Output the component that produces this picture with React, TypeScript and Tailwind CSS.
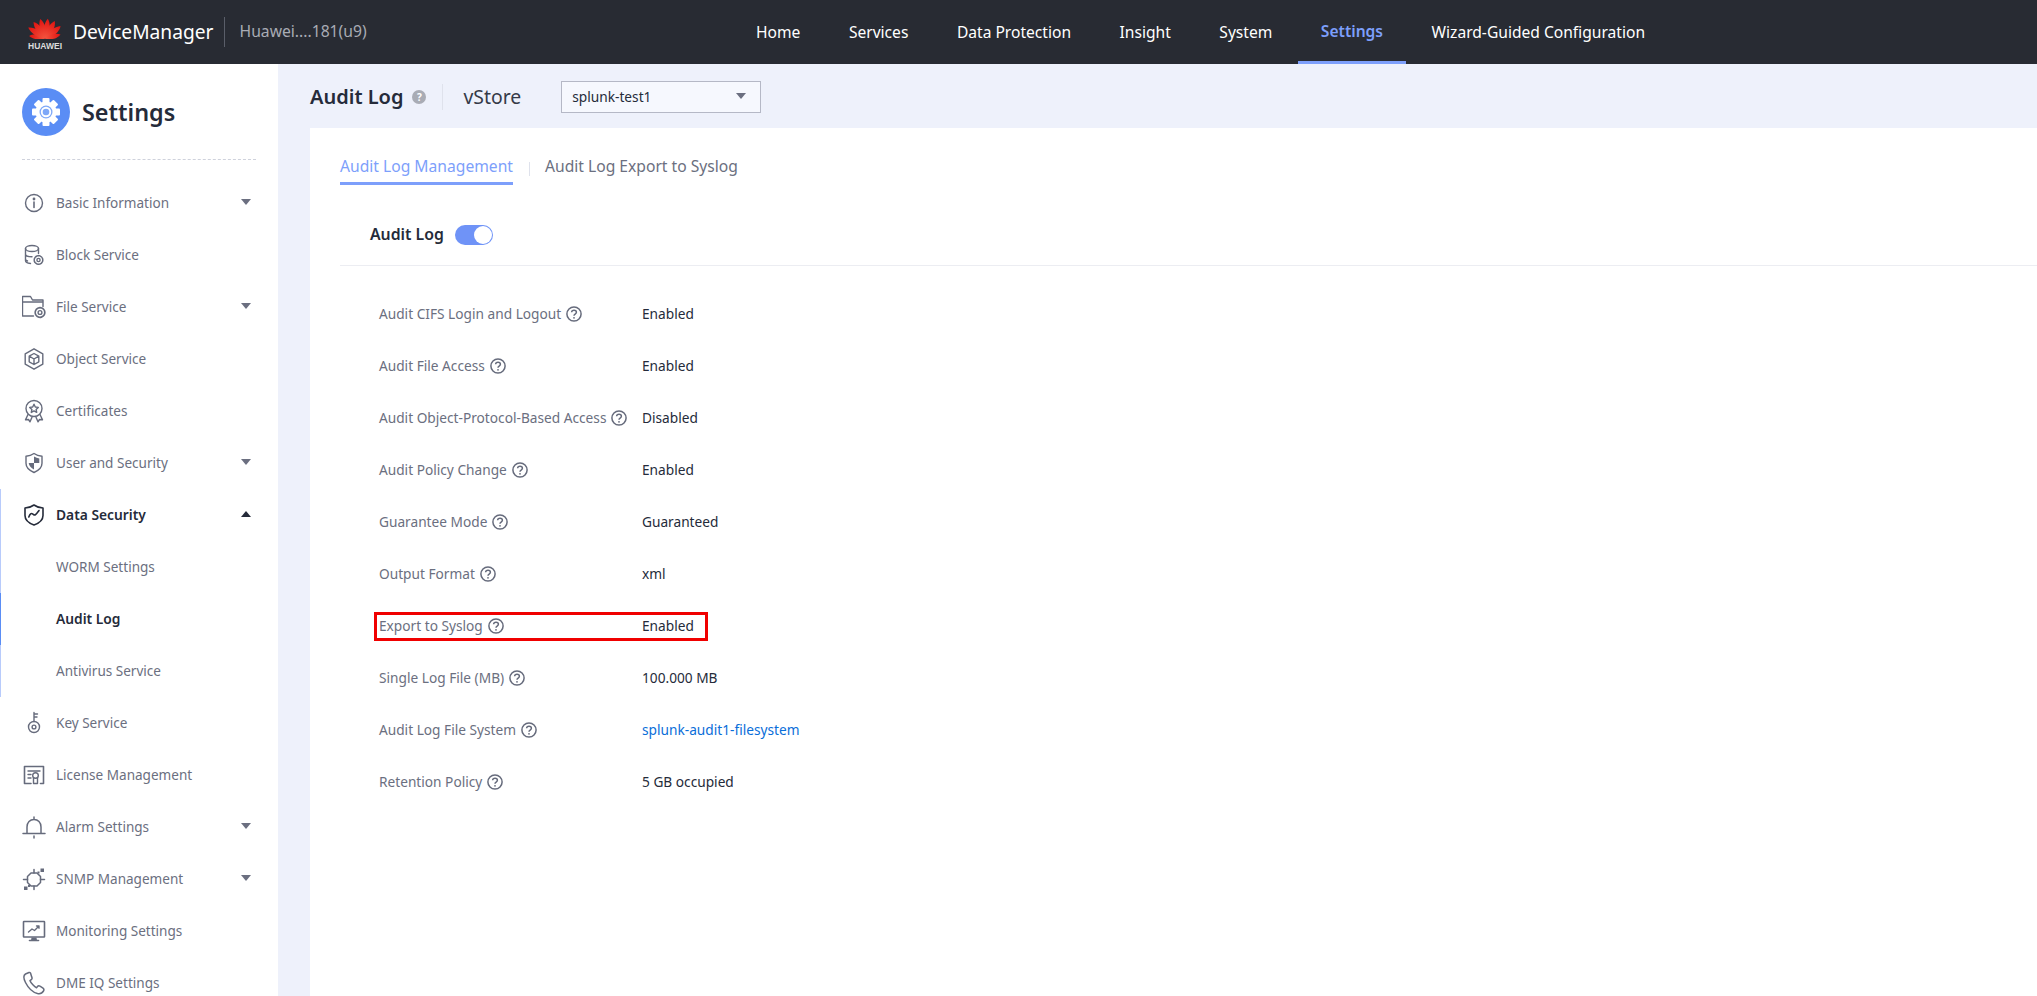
import React from "react";

const stroke = "#666b7c";

function Ic({ children, color = stroke, size = 24 }: { children: React.ReactNode; color?: string; size?: number }) {
  return (
    <svg width={size} height={size} viewBox="0 0 24 24" fill="none" stroke={color} strokeWidth={1.4} strokeLinejoin="round" strokeLinecap="round" className="shrink-0">
      {children}
    </svg>
  );
}

const InfoIcon = () => (
  <Ic>
    <circle cx="12" cy="12" r="8.5" />
    <circle cx="12" cy="8" r="0.7" fill={stroke} />
    <path d="M12 11v5.5" strokeWidth={1.6} />
  </Ic>
);
const BlockIcon = () => (
  <Ic>
    <ellipse cx="10" cy="5.500" rx="6.500" ry="3" />
    <path d="M3.500 5.500v12c0 1.500 2.300 2.800 5 3M16.500 5.500v5M3.500 11c0 1.500 2.600 2.800 6.500 2.800M3.500 16c0 .8.800 1.500 2 2" />
    <circle cx="16.500" cy="17" r="4.300" strokeDasharray="2 0.700" strokeWidth={1.500} />
    <circle cx="16.500" cy="17" r="1.600" />
  </Ic>
);
const FileIcon = () => (
  <Ic>
    <path d="M11.500 21H0.500V1.500h8l2 3.500h10.500v6.500" />
    <path d="M0.500 7h20" />
    <circle cx="18" cy="17.500" r="4.800" strokeDasharray="2.200 0.800" strokeWidth={1.700} />
    <circle cx="18" cy="17.500" r="1.900" />
  </Ic>
);
const ObjectIcon = () => (
  <Ic>
    <path d="M12 1.800l8.800 5v10.400L12 22.200l-8.800-5V6.800z" />
    <path d="M12 6.500l4.800 2.700v5.600L12 17.500l-4.800-2.700V9.200zM7.200 9.200L12 12l4.800-2.800M12 12v5.500" />
  </Ic>
);
const CertIcon = () => (
  <Ic>
    <circle cx="12" cy="9.500" r="8" />
    <path d="M12 5.200l1.300 2.800 3 .4-2.200 2 .6 3-2.700-1.500-2.700 1.500.6-3-2.200-2 3-.4z" />
    <path d="M6 15.500l-2.500 5.300 3-.3 1.500 2.300 2-4.500M18 15.500l2.500 5.300-3-.3-1.500 2.300-2-4.500" />
  </Ic>
);
const ShieldIcon = () => (
  <Ic>
    <path d="M12 2.500c2.500 1.800 5.300 2.600 8 2.800v7c0 4-3.200 7.200-8 9.200-4.800-2-8-5.200-8-9.200v-7c2.700-.2 5.500-1 8-2.800z" />
    <path d="M12 5.500c1.700 1 3.500 1.600 5.300 1.900V12H12zM12 12H6.700c.3 2.800 2.400 5 5.300 6.500z" fill={stroke} stroke="none" />
  </Ic>
);
const DataIcon = () => (
  <Ic color="#252b3a">
    <path d="M12 2c2.600 1.900 5.700 2.900 9 3v7.500c0 4.200-3.400 7.500-9 9.500-5.600-2-9-5.300-9-9.500V5c3.300-.1 6.400-1.100 9-3z" strokeWidth={1.600} />
    <path d="M6.800 14c1.200-3 2.500-4 3.700-3.200s1.800 1.900 3 .9 2.200-2.500 3.500-4.200" strokeWidth={1.600} />
  </Ic>
);
const KeyIcon = () => (
  <Ic>
    <circle cx="12" cy="16" r="5.500" />
    <circle cx="12" cy="16" r="1.900" />
    <path d="M12 10.500V1.500M12 3h3.500M12 6h3" />
  </Ic>
);
const LicenseIcon = () => (
  <Ic>
    <path d="M9 20.500H2.500v-17h19v17h-3" strokeWidth={1.600} />
    <path d="M6 8h12M6 11.500h3M6 15h3" />
    <circle cx="13.500" cy="12.500" r="2.800" />
    <path d="M11.500 15v5.500h4V15" />
  </Ic>
);
const BellIcon = () => (
  <Ic>
    <path d="M5 18.500V12c0-4.500 3-7.500 7-7.500s7 3 7 7.500v6.500M1 18.500h22M12 2v2.500M12 21v2" strokeWidth={1.500} />
  </Ic>
);
const SnmpIcon = () => (
  <Ic>
    <path d="M9 6h6l3.500 3.500v6L15 19H9l-3.500-3.500v-6z" strokeWidth={1.500} />
    <path d="M12 2.500V6M12 19v3.500M1.500 12.500h4M18.500 12.500h4" strokeWidth={1.500} />
    <rect x="18.500" y="1.500" width="3.500" height="3.500" fill={stroke} stroke="none" />
    <rect x="15.500" y="4.500" width="2" height="2" fill={stroke} stroke="none" />
    <rect x="2" y="19.500" width="3.500" height="3.500" fill={stroke} stroke="none" />
    <rect x="6" y="18" width="2" height="2" fill={stroke} stroke="none" />
  </Ic>
);
const MonitorIcon = () => (
  <Ic>
    <rect x="1.500" y="2.500" width="21" height="15.500" rx="0.500" strokeWidth={1.600} />
    <path d="M6.500 13l3.500-3 2.500 1.500 4.500-4.500M14.500 7H17v2.300" />
    <path d="M9.500 18.500h5l.5 3H9z" fill={stroke} stroke="none" />
    <path d="M7.500 21.500h9" strokeWidth={1.600} />
  </Ic>
);
const PhoneIcon = () => (
  <Ic>
    <path d="M7 1.500L3.500 3C1.500 4.200 1.500 7.500 3.500 11.500s6 9.500 12 11c2.700.6 5-.8 6-2.500.7-1.100.4-2.100-.5-2.800l-3-2c-1-.7-1.900-.5-2.500.3l-1 1.200c-2-.8-5.500-4.500-6.500-7l1.300-1c.8-.7 1-1.500.5-2.500L8.500 2C8.100 1.300 7.700 1.300 7 1.500z" strokeWidth={1.500} />
  </Ic>
);

const Caret = ({ up, dark }: { up?: boolean; dark?: boolean }) => (
  <svg width="10" height="6" viewBox="0 0 10 6" className="shrink-0 -mt-[2px]">
    <path d={up ? "M5 0l5 6H0z" : "M0 0h10L5 6z"} fill={dark ? "#252b3a" : "#6b6f80"} />
  </svg>
);

const Help = () => (
  <svg width="16" height="16" viewBox="0 0 16 16" fill="none" className="shrink-0">
    <circle cx="8" cy="8" r="7.100" stroke="#666b7c" strokeWidth="1.500" />
    <path d="M5.600 6.300C5.700 5 6.800 4.200 8 4.200c1.400 0 2.400.9 2.400 2.100 0 1.900-2.400 1.700-2.400 3.400" stroke="#666b7c" strokeWidth="1.500" />
    <circle cx="8" cy="11.800" r="0.900" fill="#666b7c" />
  </svg>
);

function HuaweiLogo() {
  const angles = [-78, -54, -32, -11, 11, 32, 54, 78];
  return (
    <div className="flex flex-col items-center w-[34px]">
      <svg width="34" height="25" viewBox="0 0 34 25">
        <defs>
          <linearGradient id="petal" x1="0" y1="0" x2="0" y2="1">
            <stop offset="0" stopColor="#e0120f" />
            <stop offset="1" stopColor="#f4543f" />
          </linearGradient>
        </defs>
        {angles.map((a) => (
          <path
            key={a}
            d="M0 0C-4.200 -6 -4 -15 -1 -20C3 -16 4.200 -6 0 0Z"
            fill="url(#petal)"
            transform={`translate(17 24.500) rotate(${a}) scale(${Math.abs(a) > 60 ? 0.8 : 1})`}
          />
        ))}
      </svg>
      <span className="mt-[3px] font-['Liberation_Sans',sans-serif] text-[8.500px] leading-[9px] font-bold text-[#dcdcdc] whitespace-nowrap">HUAWEI</span>
    </div>
  );
}

function GearLogo() {
  const teeth = [0, 45, 90, 135, 180, 225, 270, 315];
  return (
    <div className="w-12 h-12 rounded-full bg-[#5a8df5] flex items-center justify-center shrink-0">
      <svg width="30" height="30" viewBox="0 0 30 30">
        {teeth.map((a) => (
          <rect key={a} x="11.500" y="1" width="7" height="7" rx="1" fill="#fff" transform={`rotate(${a} 15 15)`} />
        ))}
        <circle cx="15" cy="15" r="10.500" fill="#fff" />
        <circle cx="15" cy="15" r="6.500" fill="#7ea8f8" />
        <circle cx="15" cy="15" r="5.200" fill="#fff" />
        <circle cx="15" cy="15" r="3.300" fill="#7ea8f8" />
      </svg>
    </div>
  );
}

type Side = { label: string; icon?: React.ReactNode; caret?: boolean };

const before: Side[] = [
  { label: "Basic Information", icon: <InfoIcon />, caret: true },
  { label: "Block Service", icon: <BlockIcon /> },
  { label: "File Service", icon: <FileIcon />, caret: true },
  { label: "Object Service", icon: <ObjectIcon /> },
  { label: "Certificates", icon: <CertIcon /> },
  { label: "User and Security", icon: <ShieldIcon />, caret: true },
];
const after: Side[] = [
  { label: "Key Service", icon: <KeyIcon /> },
  { label: "License Management", icon: <LicenseIcon /> },
  { label: "Alarm Settings", icon: <BellIcon />, caret: true },
  { label: "SNMP Management", icon: <SnmpIcon />, caret: true },
  { label: "Monitoring Settings", icon: <MonitorIcon /> },
  { label: "DME IQ Settings", icon: <PhoneIcon /> },
];

function SideRow({ item }: { item: Side }) {
  return (
    <div className="h-[52px] flex items-center pl-[22px] pr-[27px] text-[13.550px] text-[#6b6f80]">
      <span className="w-[24px] flex justify-center">{item.icon}</span>
      <span className="ml-[10px] flex-1 pt-px">{item.label}</span>
      {item.caret && <Caret />}
    </div>
  );
}

const rows: { label: string; value: string; link?: boolean }[] = [
  { label: "Audit CIFS Login and Logout", value: "Enabled" },
  { label: "Audit File Access", value: "Enabled" },
  { label: "Audit Object-Protocol-Based Access", value: "Disabled" },
  { label: "Audit Policy Change", value: "Enabled" },
  { label: "Guarantee Mode", value: "Guaranteed" },
  { label: "Output Format", value: "xml" },
  { label: "Export to Syslog", value: "Enabled" },
  { label: "Single Log File (MB)", value: "100.000 MB" },
  { label: "Audit Log File System", value: "splunk-audit1-filesystem", link: true },
  { label: "Retention Policy", value: "5 GB occupied" },
];

const nav = ["Home", "Services", "Data Protection", "Insight", "System", "Settings", "Wizard-Guided Configuration"];

export default function App() {
  return (
    <div className="relative w-[2037px] h-[996px] overflow-hidden flex flex-col bg-[#eef1fb] font-['Noto_Sans','Noto_Sans_CJK_SC',sans-serif]">
      <header className="h-16 shrink-0 bg-[#282b33] flex items-center">
        <div className="w-[733px] shrink-0 flex items-center pl-[28px]">
          <HuaweiLogo />
          <span className="ml-[11px] text-[19.200px] text-white">DeviceManager</span>
          <span className="ml-[10px] w-px h-[30px] bg-[#5a5e69]" />
          <span className="ml-[15px] text-[15.700px] text-[#a9acb5]">Huawei....181(u9)</span>
        </div>
        <nav className="h-16 flex gap-[2.500px]">
          {nav.map((n) => (
            <div
              key={n}
              className={
                n === "Settings"
                  ? "h-16 px-[23px] pt-[3px] flex items-center text-[15.600px] font-semibold text-[#7d9ffb] border-b-[3px] border-[#7d9ffb]"
                  : "h-16 px-[23px] pt-px flex items-center text-[15.600px] text-white"
              }
            >
              {n}
            </div>
          ))}
        </nav>
      </header>

      <div className="flex-1 flex min-h-0">
        <aside className="w-[278px] shrink-0 bg-white overflow-hidden">
          <div className="h-[95px] pt-[24px] pl-[22px] flex items-start">
            <GearLogo />
            <span className="ml-[12px] mt-[6px] text-[23.400px] leading-[36px] font-semibold text-[#252b3a]">Settings</span>
          </div>
          <div className="mx-[22px] border-t border-dashed border-[#cfd2dc] h-[18px]" />
          {before.map((i) => <SideRow key={i.label} item={i} />)}
          <div className="border-l border-[#b8cbfb]">
            <div className="h-[52px] flex items-center pl-[21px] pr-[27px] text-[13.800px] font-semibold text-[#252b3a]">
              <span className="w-[24px] flex justify-center"><DataIcon /></span>
              <span className="ml-[10px] flex-1 pt-px">Data Security</span>
              <Caret up dark />
            </div>
            <div className="h-[52px] pt-px flex items-center pl-[55px] text-[13.550px] text-[#6b6f80]">WORM Settings</div>
            <div className="h-[52px] pt-px flex items-center pl-[55px] text-[13.800px] font-semibold text-[#252b3a] border-l border-[#5a8df5] -ml-px">Audit Log</div>
            <div className="h-[52px] pt-px flex items-center pl-[55px] text-[13.550px] text-[#6b6f80]">Antivirus Service</div>
          </div>
          {after.map((i) => <SideRow key={i.label} item={i} />)}
        </aside>

        <main className="flex-1 min-w-0 flex flex-col pl-[32px]">
          <div className="h-[64px] shrink-0 pt-[2px] flex items-center">
            <span className="text-[20px] font-semibold text-[#252b3a]">Audit Log</span>
            <span className="ml-[9px] w-[14px] h-[14px] rounded-full bg-[#a9acb5] text-white text-[10px] font-bold flex items-center justify-center">?</span>
            <span className="ml-[16px] w-px h-[26px] bg-[#dfe2ec]" />
            <span className="ml-[20px] text-[19.400px] text-[#353a48]">vStore</span>
            <div className="ml-[40px] w-[200px] h-[32px] border border-[#b5b8c6] bg-[#f6f8fe] flex items-center justify-between pl-[10px] pr-[14px]">
              <span className="text-[13.700px] text-[#252b3a]">splunk-test1</span>
              <Caret />
            </div>
          </div>
          <section className="flex-1 bg-white pl-[30px]">
            <div className="h-[57px] flex items-end">
              <div className="h-[31px] text-[15.650px] leading-[24px] text-[#7d9ffb] border-b-[3px] border-[#7d9ffb]">Audit Log Management</div>
              <span className="ml-[16px] mb-[9px] w-px h-[14px] bg-[#dfe2ec]" />
              <div className="ml-[15px] h-[31px] text-[15.650px] leading-[24px] text-[#6b6f80]">Audit Log Export to Syslog</div>
            </div>
            <div className="h-[81px] pt-[19px] flex items-center pl-[30px] border-b border-[#ecedf2]">
              <span className="text-[15.800px] pt-px font-semibold text-[#252b3a]">Audit Log</span>
              <span className="ml-[11px] w-[38px] h-[20px] rounded-full bg-[#6f93f7] flex items-center justify-end pr-[1px]">
                <span className="w-[18px] h-[18px] rounded-full bg-white" />
              </span>
            </div>
            <div className="pt-[22px] pl-[39px]">
              {rows.map((r) => (
                <div key={r.label} className="h-[52px] flex items-center text-[13.700px]">
                  <div className="w-[263px] flex items-center text-[#6b6f80]">
                    <span>{r.label}</span>
                    <span className="ml-[5px]"><Help /></span>
                  </div>
                  <span className={r.link ? "text-[#0a6ed9]" : "text-[#252b3a]"}>{r.value}</span>
                </div>
              ))}
            </div>
          </section>
        </main>
      </div>
      <div className="absolute left-[374px] top-[612px] w-[334px] h-[29px] border-[3px] border-[#f00000] pointer-events-none" />
    </div>
  );
}
